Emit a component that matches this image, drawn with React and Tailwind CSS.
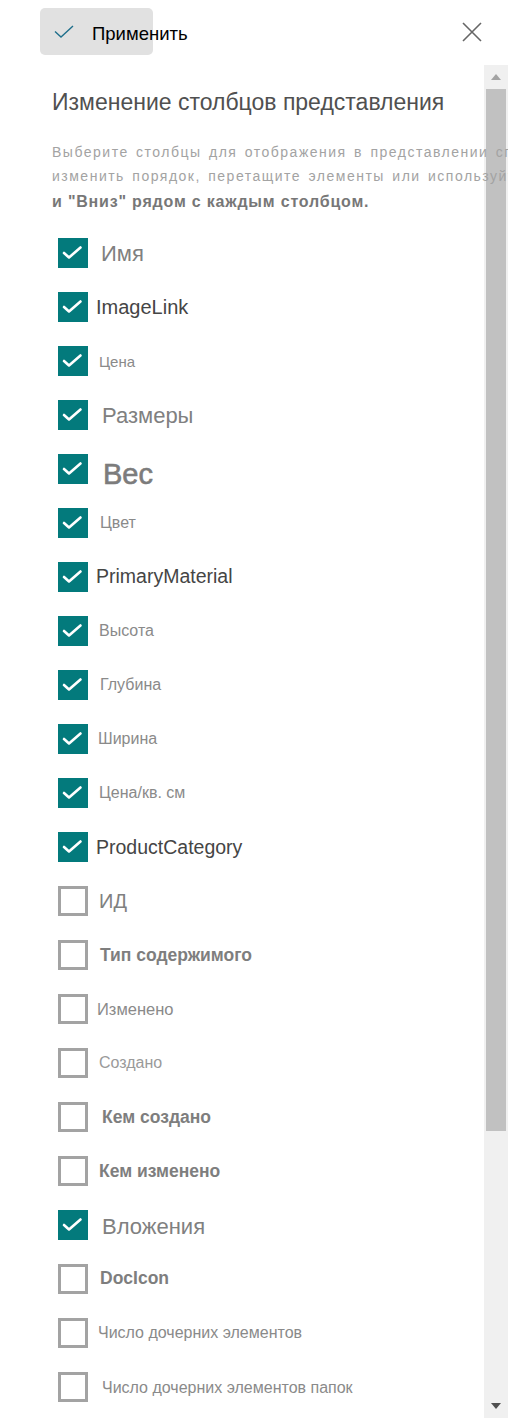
import React from 'react'

const FONT = { fontFamily: '"Liberation Sans", Arial, sans-serif' }

// каждая строка списка: свой размер шрифта, цвет и отступ — как в исходнике
const columns = [
  { label: 'Имя', checked: true, cls: 'ml-[13px] text-[22px] text-[#808080] pt-[2px]' },
  { label: 'ImageLink', checked: true, cls: 'ml-[8px] text-[20px] text-[#454545]' },
  { label: 'Цена', checked: true, cls: 'ml-[11px] text-[15px] text-[#8a8a8a]' },
  { label: 'Размеры', checked: true, cls: 'ml-[14px] text-[22px] text-[#808080] pt-[2px]' },
  { label: 'Вес', checked: true, cls: 'ml-[15px] text-[29px] text-[#7c7c7c] [-webkit-text-stroke:0.6px_#7c7c7c] pt-[10px]' },
  { label: 'Цвет', checked: true, cls: 'ml-[12px] text-[16px] text-[#8a8a8a]' },
  { label: 'PrimaryMaterial', checked: true, cls: 'ml-[8px] text-[19.5px] text-[#454545]' },
  { label: 'Высота', checked: true, cls: 'ml-[11px] text-[16px] text-[#8a8a8a]' },
  { label: 'Глубина', checked: true, cls: 'ml-[12px] text-[16px] text-[#8a8a8a]' },
  { label: 'Ширина', checked: true, cls: 'ml-[10px] text-[16px] text-[#8a8a8a]' },
  { label: 'Цена/кв. см', checked: true, cls: 'ml-[11px] text-[16px] text-[#8a8a8a]' },
  { label: 'ProductCategory', checked: true, cls: 'ml-[8px] text-[19.5px] text-[#454545] pt-[2px]' },
  { label: 'ИД', checked: false, cls: 'ml-[11px] text-[20px] text-[#808080]' },
  { label: 'Тип содержимого', checked: false, cls: 'ml-[12px] text-[17.5px] font-semibold text-[#7e7e7e] pt-[2px]' },
  { label: 'Изменено', checked: false, cls: 'ml-[9px] text-[16.5px] text-[#8a8a8a]' },
  { label: 'Создано', checked: false, cls: 'ml-[11px] text-[16px] text-[#9a9a9a]' },
  { label: 'Кем создано', checked: false, cls: 'ml-[14px] text-[17.5px] font-semibold text-[#7e7e7e] pt-[2px]' },
  { label: 'Кем изменено', checked: false, cls: 'ml-[11px] text-[17.5px] font-semibold text-[#7e7e7e] pt-[2px]' },
  { label: 'Вложения', checked: true, cls: 'ml-[14px] text-[22px] text-[#808080] pt-[4px]' },
  { label: 'DocIcon', checked: false, cls: 'ml-[12px] text-[17.5px] font-semibold text-[#7e7e7e]' },
  { label: 'Число дочерних элементов', checked: false, cls: 'ml-[10px] text-[16px] text-[#8a8a8a]' },
  { label: 'Число дочерних элементов папок', checked: false, cls: 'ml-[14px] text-[16px] text-[#8a8a8a] pt-[2px]' },
]

function Box({ checked }) {
  if (checked) {
    return (
      <div className="w-[30px] h-[30px] shrink-0 bg-[#037a7c]">
        <svg width="30" height="30" viewBox="0 0 30 30" fill="none">
          <path d="M6 15 L11 19.5 L22.5 9.5" stroke="#fff" strokeWidth="2.6" strokeLinecap="round" strokeLinejoin="round" />
        </svg>
      </div>
    )
  }
  return <div className="w-[30px] h-[30px] shrink-0 border-[3px] border-[#a3a3a3] bg-white" />
}

export default function App() {
  return (
    <div className="w-[508px] h-[1418px] bg-white flex flex-col overflow-hidden" style={FONT}>
      {/* шапка */}
      <div className="h-[65px] shrink-0 flex items-start justify-between pl-[40px] pr-[26px]">
        <button
          type="button"
          className="mt-[8px] w-[113px] h-[47px] rounded-[5px] bg-[#e1e1e1] flex items-center pl-[14px] overflow-visible whitespace-nowrap"
        >
          <svg width="20" height="14" viewBox="0 0 20 14" fill="none" className="shrink-0 mt-[1px]">
            <path d="M1 6.5 L7 12 L19 1" stroke="#1f6f8b" strokeWidth="1.4" />
          </svg>
          <span className="ml-[18px] pt-[5px] text-[18.5px] text-black">Применить</span>
        </button>
        <svg width="20" height="20" viewBox="0 0 20 20" className="mt-[22px]" fill="none">
          <path d="M1 1 L19 19 M19 1 L1 19" stroke="#666" strokeWidth="1.6" />
        </svg>
      </div>

      <div className="flex-1 flex min-h-0">
        {/* содержимое панели — длинные строки описания заходят на полосу прокрутки */}
        <div className="relative z-10 flex-1 min-w-0 pl-[52px] pt-[23px]">
          <h2 className="text-[23px] leading-[28px] text-[#505050] whitespace-nowrap">
            Изменение столбцов представления
          </h2>
          <div className="mt-[24px] text-[14px] leading-[24px] text-[#a3a3a3] whitespace-nowrap tracking-[1.5px] [word-spacing:2px]">
            <div>Выберите столбцы для отображения в представлении списка. Чтобы</div>
            <div>изменить порядок, перетащите элементы или используйте кнопки "Вверх"</div>
          </div>
          <div className="mt-[2px] text-[16px] leading-[24px] font-semibold tracking-[0.8px] text-[#777] whitespace-nowrap">
            и "Вниз" рядом с каждым столбцом.
          </div>

          <ul className="mt-[12px] pl-[6px]">
            {columns.map(c => (
              <li key={c.label} className="h-[54px] flex items-center">
                <Box checked={c.checked} />
                <span className={`whitespace-nowrap leading-none ${c.cls}`}>{c.label}</span>
              </li>
            ))}
          </ul>
        </div>

        {/* полоса прокрутки */}
        <div className="w-[24px] shrink-0 bg-[#f0f0f0] flex flex-col items-center">
          <div className="h-[24px] w-full flex items-center justify-center">
            <svg width="10" height="6" viewBox="0 0 10 6"><path d="M0 6 L5 0 L10 6 Z" fill="#a3a3a3" /></svg>
          </div>
          <div className="w-[20px] h-[1042px] bg-[#c1c1c1]" />
          <div className="flex-1" />
          <div className="h-[24px] w-full flex items-center justify-center">
            <svg width="10" height="6" viewBox="0 0 10 6"><path d="M0 0 L10 0 L5 6 Z" fill="#505050" /></svg>
          </div>
        </div>
      </div>
    </div>
  )
}
